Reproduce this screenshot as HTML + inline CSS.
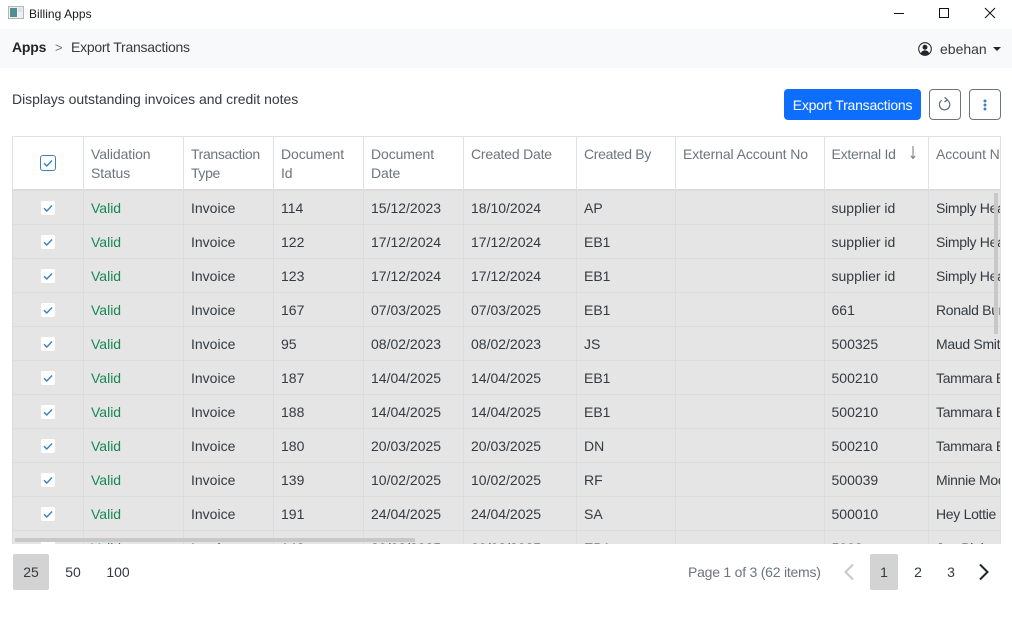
<!DOCTYPE html>
<html><head><meta charset="utf-8"><style>
*{box-sizing:border-box}
html,body{margin:0;padding:0;width:1012px;height:619px;overflow:hidden;background:#fff;font-family:"Liberation Sans",sans-serif;font-size:14px;color:#212529}
.a{position:absolute;white-space:nowrap}
#wrap{position:absolute;left:12px;top:136px;width:989px;height:408px;overflow:hidden;background:#e5e5e5}
table{border-collapse:separate;border-spacing:0;table-layout:fixed;width:1060px;position:absolute;left:0;top:0}
th{height:55px;background:#fff;font-weight:400;color:#6c757d;text-align:left;vertical-align:top;padding:8px 7px 0;line-height:19px;border-top:1px solid #dee2e6;border-left:1px solid #dee2e6;border-bottom:2px solid #dbdbdb;white-space:normal;overflow:hidden;letter-spacing:-.1px}
td{height:34px;padding:0 7px;border-left:1px solid #dcdcdc;border-bottom:1px solid #dcdcdc;white-space:nowrap;overflow:hidden;color:#343a40;background:#e5e5e5}
th:first-child,td:first-child{padding:0;text-align:center}
th:nth-child(9),td:nth-child(9){padding-left:6.500px}
td:nth-child(10){letter-spacing:-.3px}
td.v{color:#198754}
.cb{display:inline-block;width:14px;height:14px;background:#fff;border-radius:2px;vertical-align:middle;position:relative;top:-1px}
.cb svg,.hcb svg{display:block}
.hcb{display:inline-block;width:16px;height:16px;background:#fff;border:1px solid #3d80bd;border-radius:3px;vertical-align:middle;margin-top:18px}
.pg{position:absolute;top:554px;height:36px;line-height:36px;text-align:center;border-radius:2px;color:#343a40}
</style></head><body>
<svg class="a" style="left:8px;top:6px" width="16" height="14" viewBox="0 0 16 14"><rect x=".5" y=".5" width="15" height="12" fill="#f0f0f0" stroke="#b5b5b5"/><rect x="2" y="2" width="7" height="9" fill="#4f8f8f"/><rect x="10" y="2" width="4" height="4" fill="#d8e4ea"/></svg>
<div class="a" style="left:29px;top:6px;font-size:12px;line-height:16px;color:#1a1a1a;letter-spacing:.05px">Billing Apps</div>
<svg class="a" style="left:890px;top:6px" width="110" height="14" viewBox="0 0 110 14"><path d="M4 7.500h10" stroke="#111" fill="none"/><rect x="49.500" y="2.500" width="9" height="9" stroke="#111" fill="none"/><path d="M95 2l10 10M105 2l-10 10" stroke="#111" fill="none"/></svg>

<div class="a" style="left:0;top:29px;width:1012px;height:39px;background:#f8f9fa"></div>
<div class="a" style="left:12px;top:39px;line-height:17px;font-weight:700;color:#212529;letter-spacing:-.2px">Apps</div>
<div class="a" style="left:55px;top:39px;line-height:17px;font-size:13px;color:#6c757d">&gt;</div>
<div class="a" style="left:71px;top:39px;line-height:17px;color:#343a40;letter-spacing:-.26px">Export Transactions</div>
<svg class="a" style="left:918px;top:42px" width="14" height="14" viewBox="0 0 16 16"><circle cx="8" cy="8" r="7.200" fill="none" stroke="#212529" stroke-width="1.200"/><circle cx="8" cy="6" r="2.800" fill="#212529"/><path d="M3.200 13c1-2.600 3-3.400 4.800-3.400S11.800 10.400 12.800 13A7 7 0 0 1 3.200 13z" fill="#212529"/></svg>
<div class="a" style="left:940px;top:41px;line-height:17px;color:#343a40">ebehan</div>
<div class="a" style="left:993px;top:47px;width:0;height:0;border-left:4px solid transparent;border-right:4px solid transparent;border-top:4px solid #212529"></div>

<div class="a" style="left:12px;top:91px;line-height:17px;color:#343a40;letter-spacing:-.02px">Displays outstanding invoices and credit notes</div>
<div class="a" style="left:784px;top:89px;width:137px;height:31px;background:#0d6efd;border-radius:4px;color:#fff;text-align:center;line-height:32px;letter-spacing:-.22px">Export Transactions</div>
<div class="a" style="left:929px;top:89px;width:32px;height:31px;border:1px solid #6c757d;border-radius:4px"></div>
<svg class="a" style="left:938px;top:97px" width="14" height="15" viewBox="0 0 14 15"><path d="M8.600 2.800A5.200 5.200 0 1 1 3.700 3.300" fill="none" stroke="#5f6b78" stroke-width="1.200"/><path d="M6.500 .3l2.800 2.400-2.800 2.300" fill="none" stroke="#5f6b78" stroke-width="1.200"/></svg>
<div class="a" style="left:969px;top:89px;width:32px;height:31px;border:1px solid #6c757d;border-radius:4px"></div>
<svg class="a" style="left:983px;top:99px" width="4" height="12" viewBox="0 0 4 12"><circle cx="2" cy="2" r="1.500" fill="#3f7fc4"/><circle cx="2" cy="6" r="1.500" fill="#3f7fc4"/><circle cx="2" cy="10" r="1.500" fill="#3f7fc4"/></svg>

<div id="wrap"><table>
<colgroup><col style="width:71px"><col style="width:100px"><col style="width:90px"><col style="width:90px"><col style="width:100px"><col style="width:113px"><col style="width:99px"><col style="width:149px"><col style="width:104px"><col style="width:144px"></colgroup>
<thead><tr><th style="vertical-align:top"><span class="hcb"><svg width="14" height="14" viewBox="0 0 14 14"><path d="M3 7.200l2.800 2.800L11 4.500" fill="none" stroke="#3d80bd" stroke-width="1.400"/></svg></span></th><th>Validation Status</th><th style="letter-spacing:-.35px">Transaction Type</th><th>Document Id</th><th>Document Date</th><th style="letter-spacing:-.2px">Created Date</th><th style="letter-spacing:-.3px">Created By</th><th>External Account No</th><th style="letter-spacing:-.25px">External Id<span style="position:absolute;left:897px;top:10px"><svg width="8" height="14" viewBox="0 0 8 14"><path d="M4 0v12M1.800 9.800L4 12.500l2.200-2.700" fill="none" stroke="#777" stroke-width="1"/></svg></span></th><th>Account Name</th></tr></thead>
<tbody>
<tr><td><span class="cb"><svg width="14" height="14" viewBox="0 0 14 14"><path d="M3 7.200l2.800 2.800L11 4.500" fill="none" stroke="#3d80bd" stroke-width="1.400"/></svg></span></td><td class="v">Valid</td><td>Invoice</td><td>114</td><td>15/12/2023</td><td>18/10/2024</td><td>AP</td><td></td><td>supplier id</td><td>Simply Healthy</td></tr>
<tr><td><span class="cb"><svg width="14" height="14" viewBox="0 0 14 14"><path d="M3 7.200l2.800 2.800L11 4.500" fill="none" stroke="#3d80bd" stroke-width="1.400"/></svg></span></td><td class="v">Valid</td><td>Invoice</td><td>122</td><td>17/12/2024</td><td>17/12/2024</td><td>EB1</td><td></td><td>supplier id</td><td>Simply Healthy</td></tr>
<tr><td><span class="cb"><svg width="14" height="14" viewBox="0 0 14 14"><path d="M3 7.200l2.800 2.800L11 4.500" fill="none" stroke="#3d80bd" stroke-width="1.400"/></svg></span></td><td class="v">Valid</td><td>Invoice</td><td>123</td><td>17/12/2024</td><td>17/12/2024</td><td>EB1</td><td></td><td>supplier id</td><td>Simply Healthy</td></tr>
<tr><td><span class="cb"><svg width="14" height="14" viewBox="0 0 14 14"><path d="M3 7.200l2.800 2.800L11 4.500" fill="none" stroke="#3d80bd" stroke-width="1.400"/></svg></span></td><td class="v">Valid</td><td>Invoice</td><td>167</td><td>07/03/2025</td><td>07/03/2025</td><td>EB1</td><td></td><td>661</td><td>Ronald Burns</td></tr>
<tr><td><span class="cb"><svg width="14" height="14" viewBox="0 0 14 14"><path d="M3 7.200l2.800 2.800L11 4.500" fill="none" stroke="#3d80bd" stroke-width="1.400"/></svg></span></td><td class="v">Valid</td><td>Invoice</td><td>95</td><td>08/02/2023</td><td>08/02/2023</td><td>JS</td><td></td><td>500325</td><td>Maud Smith</td></tr>
<tr><td><span class="cb"><svg width="14" height="14" viewBox="0 0 14 14"><path d="M3 7.200l2.800 2.800L11 4.500" fill="none" stroke="#3d80bd" stroke-width="1.400"/></svg></span></td><td class="v">Valid</td><td>Invoice</td><td>187</td><td>14/04/2025</td><td>14/04/2025</td><td>EB1</td><td></td><td>500210</td><td>Tammara Ellis</td></tr>
<tr><td><span class="cb"><svg width="14" height="14" viewBox="0 0 14 14"><path d="M3 7.200l2.800 2.800L11 4.500" fill="none" stroke="#3d80bd" stroke-width="1.400"/></svg></span></td><td class="v">Valid</td><td>Invoice</td><td>188</td><td>14/04/2025</td><td>14/04/2025</td><td>EB1</td><td></td><td>500210</td><td>Tammara Ellis</td></tr>
<tr><td><span class="cb"><svg width="14" height="14" viewBox="0 0 14 14"><path d="M3 7.200l2.800 2.800L11 4.500" fill="none" stroke="#3d80bd" stroke-width="1.400"/></svg></span></td><td class="v">Valid</td><td>Invoice</td><td>180</td><td>20/03/2025</td><td>20/03/2025</td><td>DN</td><td></td><td>500210</td><td>Tammara Ellis</td></tr>
<tr><td><span class="cb"><svg width="14" height="14" viewBox="0 0 14 14"><path d="M3 7.200l2.800 2.800L11 4.500" fill="none" stroke="#3d80bd" stroke-width="1.400"/></svg></span></td><td class="v">Valid</td><td>Invoice</td><td>139</td><td>10/02/2025</td><td>10/02/2025</td><td>RF</td><td></td><td>500039</td><td>Minnie Moore</td></tr>
<tr><td><span class="cb"><svg width="14" height="14" viewBox="0 0 14 14"><path d="M3 7.200l2.800 2.800L11 4.500" fill="none" stroke="#3d80bd" stroke-width="1.400"/></svg></span></td><td class="v">Valid</td><td>Invoice</td><td>191</td><td>24/04/2025</td><td>24/04/2025</td><td>SA</td><td></td><td>500010</td><td>Hey Lottie</td></tr>
<tr><td><span class="cb"><svg width="14" height="14" viewBox="0 0 14 14"><path d="M3 7.200l2.800 2.800L11 4.500" fill="none" stroke="#3d80bd" stroke-width="1.400"/></svg></span></td><td class="v">Valid</td><td>Invoice</td><td>148</td><td>20/03/2025</td><td>20/03/2025</td><td>EB1</td><td></td><td>5003</td><td>Joe Blake</td></tr>
</tbody></table>
<div class="a" style="left:3px;top:402px;width:400px;height:4px;background:#c8c8c8"></div>
<div class="a" style="left:982px;top:57px;width:4px;height:141px;background:#c8c8c8"></div>
<div class="a" style="left:988px;top:0;width:1px;height:408px;background:#dedede"></div>
</div>

<div class="pg" style="left:13px;width:36px;background:#d3d3d3">25</div>
<div class="pg" style="left:55px;width:36px">50</div>
<div class="pg" style="left:100px;width:36px">100</div>
<div class="a" style="left:688px;top:564px;line-height:17px;color:#6c757d;letter-spacing:-.23px">Page 1 of 3 (62 items)</div>
<svg class="a" style="left:842px;top:563px" width="14" height="18" viewBox="0 0 14 18"><path d="M11 1.500L3.500 9l7.500 7.500" fill="none" stroke="#c4c8cc" stroke-width="2"/></svg>
<div class="pg" style="left:870px;width:28px;background:#d3d3d3">1</div>
<div class="pg" style="left:904px;width:28px">2</div>
<div class="pg" style="left:937px;width:28px">3</div>
<svg class="a" style="left:977px;top:563px" width="14" height="18" viewBox="0 0 14 18"><path d="M3 1.500L10.500 9 3 16.500" fill="none" stroke="#212529" stroke-width="2"/></svg>
</body></html>
